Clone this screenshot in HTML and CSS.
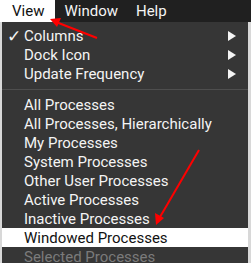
FILE: index.html
```html
<!DOCTYPE html>
<html lang="en">
<head>
    <meta charset="UTF-8">
    <title>View menu</title>
    <link rel="stylesheet" href="styles.css">
</head>
<body>

    <!-- Menu bar -->
    <div class="menubar">
        <span class="menubar-item active">View</span>
        <span class="menubar-item">Window</span>
        <span class="menubar-item">Help</span>
    </div>

    <!-- Open View menu -->
    <div class="menu">
        <div class="menu-item"><span class="check">✓</span>Columns<span class="submenu"></span></div>
        <div class="menu-item">Dock Icon<span class="submenu"></span></div>
        <div class="menu-item">Update Frequency<span class="submenu"></span></div>
        <div class="separator"></div>
        <div class="menu-item">All Processes</div>
        <div class="menu-item">All Processes, Hierarchically</div>
        <div class="menu-item">My Processes</div>
        <div class="menu-item">System Processes</div>
        <div class="menu-item">Other User Processes</div>
        <div class="menu-item">Active Processes</div>
        <div class="menu-item">Inactive Processes</div>
        <div class="menu-item selected">Windowed Processes</div>
        <div class="menu-item disabled">Selected Processes</div>
    </div>

    <!-- Annotation arrows -->
    <svg class="arrows" width="251" height="263" viewBox="0 0 251 263">
        <line x1="97" y1="38" x2="56" y2="22" stroke="#f00" stroke-width="2"/>
        <polygon points="50,19 61,18 57,27" fill="#f00"/>
        <line x1="199" y1="150" x2="160" y2="217" stroke="#f00" stroke-width="2"/>
        <polygon points="156,225 155,213 164,218" fill="#f00"/>
    </svg>

</body>
</html>
```

FILE: styles.css
```css
body {
    margin: 0;
    background-color: #d8d8d8;
    font-family: Roboto, "Liberation Sans", sans-serif;
    font-size: 15px;
    color: #f4f4f4;
    overflow: hidden;
}
.menubar {
    display: flex;
    height: 22px;
    background-color: #202020;
}
.menubar-item {
    padding: 0 9px;
    line-height: 22px;
}
.menubar-item.active {
    padding: 0 11px 0 12px;
    background-color: #fff;
    color: #111;
}
.menu {
    width: 246px;
    margin-left: 2px;
    padding-top: 4px;
    background-color: #363636;
}
.menu-item {
    display: flex;
    align-items: center;
    height: 19px;
    padding: 0 12px 0 22px;
    position: relative;
}
.check {
    position: absolute;
    left: 5px;
    font-family: "DejaVu Sans", sans-serif;
    font-size: 17px;
}
.submenu {
    margin-left: auto;
    width: 0;
    height: 0;
    border-top: 5px solid transparent;
    border-bottom: 5px solid transparent;
    border-left: 8px solid #f4f4f4;
}
.separator {
    height: 1px;
    margin: 6px 0 5px;
    background-color: #4e4e4e;
}
.selected {
    background-color: #fff;
    color: #111;
}
.disabled {
    color: #7b7b7b;
}
.arrows {
    position: absolute;
    top: 0;
    left: 0;
}
```
